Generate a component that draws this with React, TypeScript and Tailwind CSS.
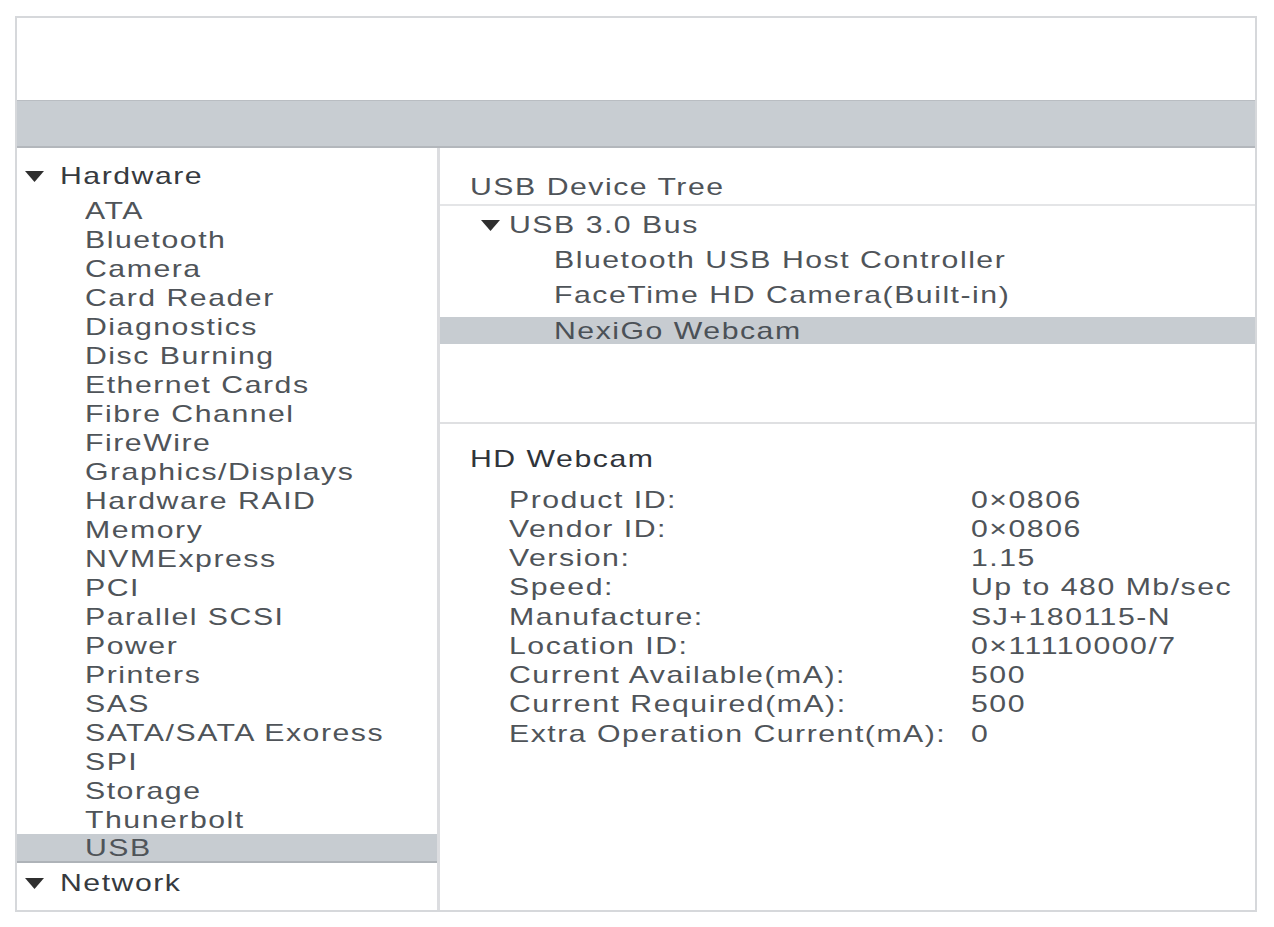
import { useState } from "react";

const hardwareItems = [
  "ATA",
  "Bluetooth",
  "Camera",
  "Card Reader",
  "Diagnostics",
  "Disc Burning",
  "Ethernet Cards",
  "Fibre Channel",
  "FireWire",
  "Graphics/Displays",
  "Hardware RAID",
  "Memory",
  "NVMExpress",
  "PCI",
  "Parallel SCSI",
  "Power",
  "Printers",
  "SAS",
  "SATA/SATA Exoress",
  "SPI",
  "Storage",
  "Thunerbolt",
  "USB",
];

const usbDevices = [
  "Bluetooth USB Host Controller",
  "FaceTime HD Camera(Built-in)",
  "NexiGo Webcam",
];

const properties = [
  ["Product ID:", "0×0806"],
  ["Vendor ID:", "0×0806"],
  ["Version:", "1.15"],
  ["Speed:", "Up to 480 Mb/sec"],
  ["Manufacture:", "SJ+180115-N"],
  ["Location ID:", "0×11110000/7"],
  ["Current Available(mA):", "500"],
  ["Current Required(mA):", "500"],
  ["Extra Operation Current(mA):", "0"],
];

// the screenshot's type is a wide Helvetica, so stretch the glyphs a bit
const Txt = ({ children }: { children: string }) => (
  <span className="inline-block origin-left scale-x-[1.26] whitespace-nowrap leading-none">
    {children}
  </span>
);

const Arrow = ({ className }: { className?: string }) => (
  <svg width="19" height="11" viewBox="0 0 19 11" className={className}>
    <path d="M0 0 L19 0 L9.5 11 Z" fill="#2f2f2f" />
  </svg>
);

export default function App() {
  const [selected, setSelected] = useState("USB");
  const [device, setDevice] = useState("NexiGo Webcam");

  return (
    <div className="min-h-[927px] w-full bg-white pt-4 pl-[15px] font-['Liberation_Sans',Arial,sans-serif] text-[24px] tracking-[1.2px] text-[#4f5459]">
      <div className="flex h-[896px] w-[1242px] flex-col border-2 border-[#d6d8db]">
        {/* Toolbar */}
        <div className="h-[82px] bg-white" />
        <div className="h-[48px] border-t border-b-2 border-t-[#b9bdc2] border-b-[#b3b7bc] bg-[#c8cdd2]" />

        <div className="flex min-h-0 flex-1">
          {/* Sidebar */}
          <div className="w-[423px] shrink-0 border-r-[3px] border-[#dcdde0] pt-[11px]">
            <div className="flex h-[34px] items-center pl-[8px] text-[#363a40]">
              <Arrow className="mr-[16px]" />
              <Txt>Hardware</Txt>
            </div>
            <div className="mt-[3px] flex flex-col">
              {hardwareItems.map((item) => (
                <div
                  key={item}
                  onClick={() => setSelected(item)}
                  className={
                    item === selected
                      ? "flex h-[29px] items-center border-b-2 border-[#aeb3b8] bg-[#c7ccd1] pl-[68px]"
                      : "flex h-[29px] items-center pl-[68px]"
                  }
                >
                  <Txt>{item}</Txt>
                </div>
              ))}
            </div>
            <div className="flex h-[40px] items-center pl-[8px] text-[#363a40]">
              <Arrow className="mr-[16px]" />
              <Txt>Network</Txt>
            </div>
          </div>

          {/* Right panel */}
          <div className="flex min-w-0 flex-1 flex-col">
            <div className="h-[276px] shrink-0 border-b-2 border-[#dfe0e2]">
              <div className="flex h-[58px] items-end border-b-2 border-[#e4e5e7] pb-[3px] pl-[30px]">
                <div className="flex h-[29px] items-center">
                  <Txt>USB Device Tree</Txt>
                </div>
              </div>
              <div className="flex flex-col gap-[9px] pt-[6px]">
                <div className="flex h-[26px] items-center pl-[41px]">
                  <Arrow className="mr-[9px]" />
                  <Txt>USB 3.0 Bus</Txt>
                </div>
                {usbDevices.map((d) => (
                  <div
                    key={d}
                    onClick={() => setDevice(d)}
                    className={
                      d === device
                        ? "flex h-[27px] items-center bg-[#c7ccd1] pl-[114px] text-[#4b5157]"
                        : "flex h-[26px] items-center pl-[114px]"
                    }
                  >
                    <Txt>{d}</Txt>
                  </div>
                ))}
              </div>
            </div>

            <div className="flex flex-col pt-[20px]">
              <div className="flex h-[29px] items-center pl-[30px] text-[#30343a]">
                <Txt>HD Webcam</Txt>
              </div>
              <div className="mt-[12px] flex flex-col">
                {properties.map(([label, value]) => (
                  <div key={label} className="flex h-[29.25px] items-center pl-[69px]">
                    <div className="w-[462px] shrink-0">
                      <Txt>{label}</Txt>
                    </div>
                    <Txt>{value}</Txt>
                  </div>
                ))}
              </div>
            </div>
          </div>
        </div>
      </div>
    </div>
  );
}
